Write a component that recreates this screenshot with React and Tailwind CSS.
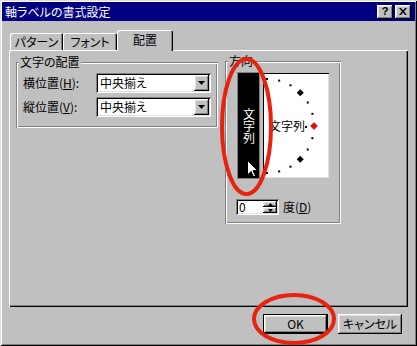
import React from "react";

const raised =
  "shadow-[inset_-1px_-1px_#000,inset_1px_1px_#fff,inset_-2px_-2px_#808080,inset_2px_2px_#dfdfdf]";
const sunken =
  "shadow-[inset_1px_1px_#808080,inset_-1px_-1px_#fff,inset_2px_2px_#000,inset_-2px_-2px_#dfdfdf]";
const etched =
  "shadow-[inset_1px_1px_#808080,inset_-1px_-1px_#fff,inset_2px_2px_#fff,inset_-2px_-2px_#808080]";

function Tab({ label, active, width }) {
  return (
    <div
      className={`flex items-center justify-center bg-[#c0c0c0] rounded-t-[2px] shadow-[inset_1px_1px_#fff,inset_-1px_0_#000,inset_-2px_0_#808080] ${
        active ? "h-[21px] -mb-px relative z-10 pb-[2px]" : "h-[17px]"
      }`}
      style={{ width }}
    >
      <span className="leading-none">{label}</span>
    </div>
  );
}

function Combo({ value }) {
  return (
    <div className={`w-[115px] h-[20px] bg-white ${sunken} flex items-center justify-between pl-[4px] pr-[2px]`}>
      <span className="leading-none">{value}</span>
      <div className={`w-[15px] h-[16px] bg-[#c0c0c0] ${raised} flex items-center justify-center`}>
        <svg width="7" height="4" viewBox="0 0 7 4">
          <polygon points="0,0 7,0 3.5,4" fill="#000" />
        </svg>
      </div>
    </div>
  );
}

function Group({ label, className, children }) {
  return (
    <div className={`relative ${etched} ${className}`}>
      <span className="absolute -top-[7px] left-[3px] bg-[#c0c0c0] px-px leading-[14px]">{label}</span>
      {children}
    </div>
  );
}

function Dial() {
  const cx = 4;
  const cy = 53;
  const r = 47;
  const items = [];
  for (let a = -90; a <= 90; a += 15) {
    const rad = (a * Math.PI) / 180;
    const x = cx + r * Math.cos(rad);
    const y = cy + r * Math.sin(rad);
    if (a === 0) {
      items.push(<polygon key={a} points={`${x},${y - 3.5} ${x + 3.5},${y} ${x},${y + 3.5} ${x - 3.5},${y}`} fill="#e01010" stroke="#600" strokeWidth="0.5" />);
    } else if (a === -45 || a === 45) {
      items.push(<polygon key={a} points={`${x},${y - 3.5} ${x + 3.5},${y} ${x},${y + 3.5} ${x - 3.5},${y}`} fill="#000" />);
    } else {
      items.push(<rect key={a} x={x - 1} y={y - 1} width="2" height="2" fill="#000" />);
    }
  }
  return (
    <div className="relative w-[66px] h-[105px] bg-white shadow-[inset_1px_1px_#000,inset_-1px_-1px_#dfdfdf] overflow-hidden">
      <svg className="absolute inset-0" width="66" height="105" viewBox="0 0 66 105">
        {items}
        <rect x="42" y="53" width="2" height="2" fill="#000" />
      </svg>
      <span className="absolute left-[6px] top-[47px] leading-none">文字列</span>
    </div>
  );
}

export default function App() {
  return (
    <div className="relative w-[417px] h-[346px] bg-[#c0c0c0] overflow-hidden p-[2px] flex flex-col text-[12px] text-black font-['Noto_Sans_CJK_JP',sans-serif] [font-feature-settings:'palt'] shadow-[inset_1px_1px_#dfdfdf,inset_-1px_-1px_#000,inset_2px_2px_#fff,inset_-2px_-2px_#808080]">
      {/* title bar */}
      <div className="h-[19px] bg-[#000080] flex items-center justify-between pl-[3px] pr-[4px]">
        <span className="text-white leading-none">軸ラベルの書式設定</span>
        <div className="flex gap-[2px]">
          <div className={`w-[16px] h-[14px] bg-[#c0c0c0] ${raised} flex items-center justify-center`}>
            <span className="font-['Liberation_Sans',sans-serif] font-bold text-[11px] leading-none">?</span>
          </div>
          <div className={`w-[16px] h-[14px] bg-[#c0c0c0] ${raised} flex items-center justify-center`}>
            <svg width="8" height="7" viewBox="0 0 8 7">
              <path d="M0 0h2l2 2.5L6 0h2L5 3.5 8 7H6L4 4.5 2 7H0l3-3.5z" fill="#000" />
            </svg>
          </div>
        </div>
      </div>

      {/* tabs */}
      <div className="mt-[9px] h-[20px] flex items-end pl-[8px]">
        <Tab label="パターン" width={53} />
        <Tab label="フォント" width={54} />
        <Tab label="配置" width={56} active />
      </div>

      {/* panel */}
      <div className="ml-[7px] w-[399px] h-[257px] shadow-[inset_1px_1px_#fff,inset_-1px_-1px_#000,inset_-2px_-2px_#808080] pl-[7px] pt-[11px] flex items-start gap-[7px]">
        <Group label="文字の配置" className="w-[202px] h-[66px] mt-px pt-[11px] pl-[7px] flex flex-col gap-[4px]">
          <div className="flex items-center">
            <span className="w-[73px] leading-none">
              横位置(<span className="underline">H</span>):
            </span>
            <Combo value="中央揃え" />
          </div>
          <div className="flex items-center">
            <span className="w-[73px] leading-none">
              縦位置(<span className="underline">V</span>):
            </span>
            <Combo value="中央揃え" />
          </div>
        </Group>

        <Group label="方向" className="w-[116px] h-[163px] pt-[12px] pl-[11px] flex flex-col">
          <div className="ml-[2px] flex gap-[4px]">
            <div className="relative w-[21px] h-[105px] bg-black shadow-[0_0_0_1px_#808080] flex items-center justify-center">
              <span className="text-white leading-none [writing-mode:vertical-rl]">文字列</span>
              <svg className="absolute left-[9px] top-[87px]" width="11" height="18" viewBox="0 0 11 18">
                <polygon points="0.5,0.5 0.5,15 4,11.5 6.5,17 8.5,16 6,10.5 10.5,10.5" fill="#fff" stroke="#000" strokeWidth="1" />
              </svg>
            </div>
            <Dial />
          </div>
          <div className="mt-[21px] flex items-center">
            <div className={`w-[43px] h-[16px] bg-white ${sunken} flex items-center pl-[3px] pr-[2px]`}>
              <span className="leading-none flex-1">0</span>
              <div className="flex flex-col">
                <div className={`w-[14px] h-[6px] bg-[#c0c0c0] ${raised} flex items-center justify-center`}>
                  <svg width="5" height="3" viewBox="0 0 5 3"><polygon points="2.5,0 5,3 0,3" fill="#000" /></svg>
                </div>
                <div className={`w-[14px] h-[6px] bg-[#c0c0c0] ${raised} flex items-center justify-center`}>
                  <svg width="5" height="3" viewBox="0 0 5 3"><polygon points="0,0 5,0 2.5,3" fill="#000" /></svg>
                </div>
              </div>
            </div>
            <span className="ml-[4px] leading-none">
              度(<span className="underline">D</span>)
            </span>
          </div>
        </Group>
      </div>

      {/* buttons */}
      <div className="mt-[7px] flex justify-end gap-[10px] pr-[13px]">
        <div className="w-[65px] h-[20px] border border-black">
          <div className={`w-full h-full ${raised} flex items-center justify-center`}>
            <span className="leading-none">OK</span>
          </div>
        </div>
        <div className={`w-[64px] h-[20px] ${raised} flex items-center justify-center`}>
          <span className="leading-none">キャンセル</span>
        </div>
      </div>

      {/* red annotation marks */}
      <svg className="absolute inset-0 pointer-events-none" width="417" height="346" viewBox="0 0 417 346">
        <ellipse cx="246.5" cy="126.5" rx="24.5" ry="67.5" fill="none" stroke="#e8220e" strokeWidth="4" />
        <ellipse cx="294" cy="319" rx="40" ry="24" fill="none" stroke="#e8220e" strokeWidth="4" />
      </svg>
    </div>
  );
}
